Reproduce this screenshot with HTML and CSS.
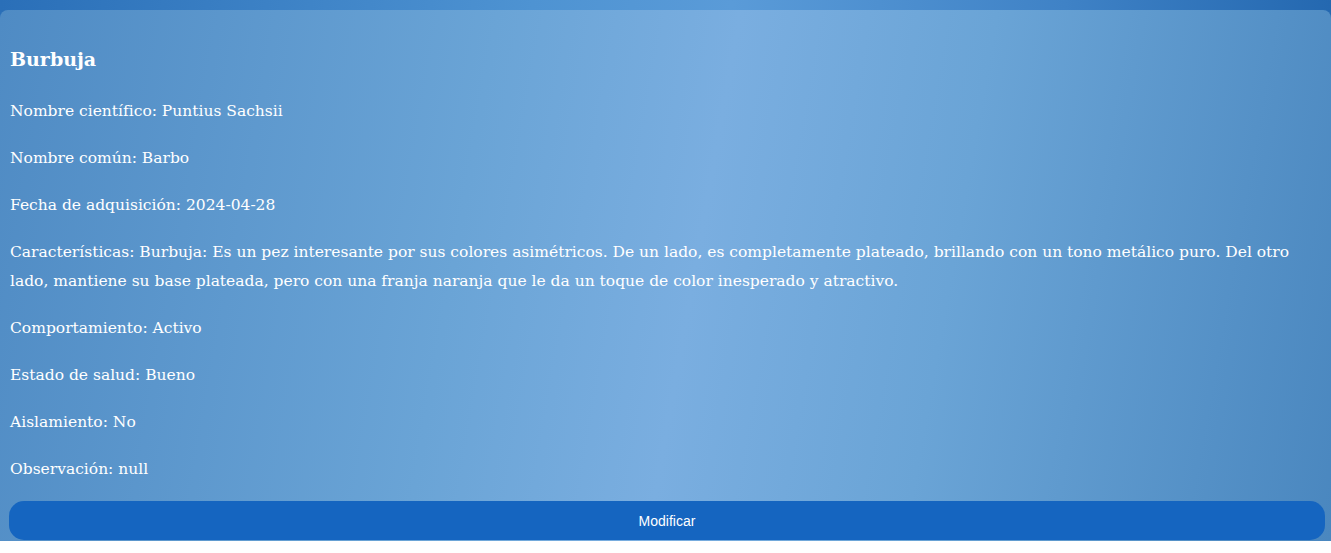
FILE: index.html
```html
<!DOCTYPE html>
<html lang="es">
<head>
<meta charset="utf-8">
<title>Burbuja</title>
<link rel="stylesheet" href="styles.css">
</head>
<body>
<div class="page">
  <div class="card">
    <h3 class="title">Burbuja</h3>
    <p class="field">Nombre científico: Puntius Sachsii</p>
    <p class="field">Nombre común: Barbo</p>
    <p class="field">Fecha de adquisición: 2024-04-28</p>
    <p class="field">Características: Burbuja: Es un pez interesante por sus colores asimétricos. De un lado, es completamente plateado, brillando con un tono metálico puro. Del otro lado, mantiene su base plateada, pero con una franja naranja que le da un toque de color inesperado y atractivo.</p>
    <p class="field">Comportamiento: Activo</p>
    <p class="field">Estado de salud: Bueno</p>
    <p class="field">Aislamiento: No</p>
    <p class="field field-last">Observación: null</p>
    <button class="btn" type="button">Modificar</button>
  </div>
</div>
</body>
</html>
```

FILE: styles.css
```css
html, body {
  margin: 0;
  padding: 0;
  background: #ffffff;
}

.page {
  padding-top: 10px;
  background: linear-gradient(to right, #2a6fb8 0%, #4e93d2 40%, #5a9bd8 55%, #3f82c6 80%, #2468b0 100%);
}

.card {
  display: flex;
  flex-direction: column;
  padding: 12px 6px 1px 9px;
  border-radius: 8px 8px 0 0;
  background: linear-gradient(100deg, #4f8bc4 0%, #6aa4d6 35%, #7aaee0 52%, #6aa4d6 70%, #4a87bf 100%);
  color: #ffffff;
  font-family: "DejaVu Serif", Georgia, serif;
}

.title {
  margin: 23px 0;
  padding-left: 1px;
  font-size: 19px;
  line-height: 29px;
  font-weight: bold;
}

.field {
  margin: 0 0 18px;
  padding-left: 1px;
  font-size: 15.5px;
  line-height: 29px;
}

.title + .field {
  margin-top: 0;
}

.field-last {
  margin-bottom: 17px;
}

.btn {
  height: 39px;
  border: none;
  border-radius: 15px;
  background: #1565c0;
  color: #ffffff;
  font-family: "Liberation Sans", Arial, sans-serif;
  font-size: 14px;
}
```
